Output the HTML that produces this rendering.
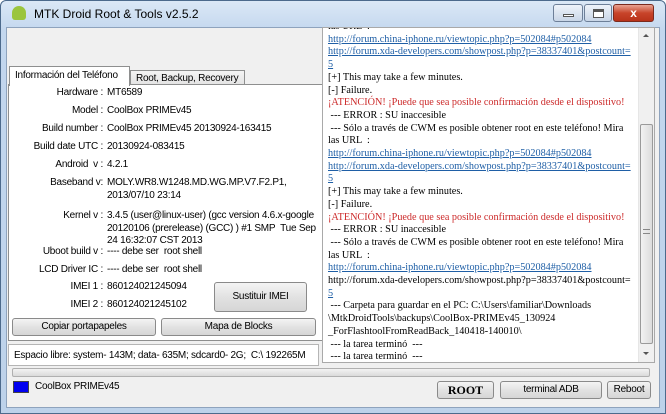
<!DOCTYPE html>
<html><head><meta charset="utf-8"><style>
*{margin:0;padding:0;box-sizing:border-box}
body{width:666px;height:414px;overflow:hidden;background:#fff;font-family:"Liberation Sans",sans-serif;font-size:10px;letter-spacing:-0.25px;color:#000;position:relative}
.abs{position:absolute;white-space:nowrap}
#win{left:0;top:0;width:666px;height:414px;background:linear-gradient(#dbe8f6,#c3d7ee 30px,#bdd2ea);border:1px solid #4c6a8c;border-radius:6px 6px 0 0}
#client{left:6px;top:27px;width:654px;height:381px;background:#f0f0f0;border:1px solid #8ea3bd}
.title{left:34px;top:7px;font-size:12px;letter-spacing:0;color:#000}
.cb{top:4px;height:18px;border:1px solid #6d7f98;border-radius:3px;background:linear-gradient(#eef3fa,#c9d6e7)}
.lbl{position:absolute;right:563px;text-align:right;white-space:nowrap}
.val{position:absolute;left:107px;white-space:nowrap}
.btn{position:absolute;border:1px solid #8a8a8a;border-radius:3px;background:linear-gradient(#f4f4f4,#e2e2e2 50%,#d6d6d6);text-align:center;font-size:10px;white-space:nowrap}
#log{left:322px;top:27px;width:333px;height:336px;background:#fff;border:1px solid #a9a9a9;overflow:hidden}
#txt{position:absolute;left:5px;top:-7px;width:312px;font-family:"Liberation Serif",serif;font-size:10.2px;letter-spacing:0;line-height:12.7px;white-space:nowrap}
#txt a{color:#1f5fa6;text-decoration:underline}
.r{color:#cc2a2a}
</style></head><body>
<div id="win" class="abs"></div>
<div class="abs" style="left:12px;top:6px;width:14px;height:14px;border-radius:7px 7px 3px 3px;background:#9bc53d"></div>
<div class="abs title">MTK Droid Root &amp; Tools v2.5.2</div>
<div class="abs cb" style="left:553px;width:30px"><div class="abs" style="left:9px;top:9px;width:11px;height:3px;background:#fff;border:1px solid #555"></div></div>
<div class="abs cb" style="left:584px;width:28px"><div class="abs" style="left:8px;top:4px;width:11px;height:9px;border:1px solid #555;border-top-width:3px;background:#fff"></div></div>
<div class="abs cb" style="left:613px;width:41px;background:linear-gradient(#e9a393,#c8442a 50%,#b8321a);border-color:#7a2a1e;color:#fff;text-align:center;font-weight:bold;font-size:12px;line-height:16px">x</div>
<div id="client" class="abs"></div>

<div class="abs" style="left:130px;top:70px;width:115px;height:16px;border:1px solid #8e8f8f;background:linear-gradient(#f4f4f4,#e3e3e3);padding:2px 0 0 5px">Root, Backup, Recovery</div>
<div class="abs" style="left:8px;top:84px;width:315px;height:257px;border:1px solid #8e8f8f;background:#fff"></div>
<div class="abs" style="left:9px;top:66px;width:121px;height:20px;border:1px solid #8e8f8f;border-bottom:none;background:#fff;padding:3px 0 0 5px">Información del Teléfono</div>

<div class="lbl" style="top:87px">Hardware :</div><div class="val" style="top:87px">MT6589</div>
<div class="lbl" style="top:105px">Model :</div><div class="val" style="top:105px">CoolBox PRIMEv45</div>
<div class="lbl" style="top:123px">Build number :</div><div class="val" style="top:123px">CoolBox PRIMEv45 20130924-163415</div>
<div class="lbl" style="top:141px">Build date UTC :</div><div class="val" style="top:141px">20130924-083415</div>
<div class="lbl" style="top:159px">Android &nbsp;v :</div><div class="val" style="top:159px">4.2.1</div>
<div class="lbl" style="top:177px">Baseband v:</div><div class="val" style="top:177px;line-height:12.5px">MOLY.WR8.W1248.MD.WG.MP.V7.F2.P1,<br>2013/07/10 23:14</div>
<div class="lbl" style="top:210px">Kernel v :</div><div class="val" style="top:210px;line-height:12.5px">3.4.5 (user@linux-user) (gcc version 4.6.x-google<br>20120106 (prerelease) (GCC) ) #1 SMP &nbsp;Tue Sep<br>24 16:32:07 CST 2013</div>
<div class="lbl" style="top:246px">Uboot build v :</div><div class="val" style="top:246px">---- debe ser &nbsp;root shell</div>
<div class="lbl" style="top:264px">LCD Driver IC :</div><div class="val" style="top:264px">---- debe ser &nbsp;root shell</div>
<div class="lbl" style="top:281px">IMEI 1 :</div><div class="val" style="top:281px">860124021245094</div>
<div class="lbl" style="top:299px">IMEI 2 :</div><div class="val" style="top:299px">860124021245102</div>
<div class="btn" style="left:214px;top:282px;width:93px;height:30px;line-height:28px">Sustituir IMEI</div>
<div class="btn" style="left:12px;top:318px;width:144px;height:18px;line-height:16px">Copiar portapapeles</div>
<div class="btn" style="left:161px;top:318px;width:155px;height:18px;line-height:16px">Mapa de Blocks</div>

<div class="abs" style="left:8px;top:344px;width:311px;height:22px;border:1px solid #b5b5b5;background:#fff;padding:5px 0 0 5px">Espacio libre: system- 143M; data- 635M; sdcard0- 2G; &nbsp;C:\ 192265M</div>

<div id="log" class="abs"><div id="txt">
las URL &nbsp;:<br>
<a>http://forum.china-iphone.ru/viewtopic.php?p=502084#p502084</a><br>
<a>http://forum.xda-developers.com/showpost.php?p=38337401&amp;postcount=</a><br>
<a>5</a><br>
[+] This may take a few minutes.<br>
[-] Failure.<br>
<span class="r">¡ATENCIÓN! ¡Puede que sea posible confirmación desde el dispositivo!</span><br>
&nbsp;--- ERROR : SU inaccesible<br>
&nbsp;--- Sólo a través de CWM es posible obtener root en este teléfono! Mira<br>
las URL &nbsp;:<br>
<a>http://forum.china-iphone.ru/viewtopic.php?p=502084#p502084</a><br>
<a>http://forum.xda-developers.com/showpost.php?p=38337401&amp;postcount=</a><br>
<a>5</a><br>
[+] This may take a few minutes.<br>
[-] Failure.<br>
<span class="r">¡ATENCIÓN! ¡Puede que sea posible confirmación desde el dispositivo!</span><br>
&nbsp;--- ERROR : SU inaccesible<br>
&nbsp;--- Sólo a través de CWM es posible obtener root en este teléfono! Mira<br>
las URL &nbsp;:<br>
<a>http://forum.china-iphone.ru/viewtopic.php?p=502084#p502084</a><br>
http://forum.xda-developers.com/showpost.php?p=38337401&amp;postcount=<br>
<a>5</a><br>
&nbsp;--- Carpeta para guardar en el PC: C:\Users\familiar\Downloads<br>
\MtkDroidTools\backups\CoolBox-PRIMEv45_130924<br>
_ForFlashtoolFromReadBack_140418-140010\<br>
&nbsp;--- la tarea terminó &nbsp;---<br>
&nbsp;--- la tarea terminó &nbsp;---
</div>
<div class="abs" style="left:315px;top:0;width:17px;height:334px;background:#f0f0f0;border-left:1px solid #e6e6e6"></div>
<div class="abs" style="left:320px;top:6px;width:0;height:0;border:3px solid transparent;border-bottom:3px solid #555;border-top:none"></div>
<div class="abs" style="left:317px;top:96px;width:13px;height:220px;border:1px solid #9a9a9a;border-radius:2px;background:linear-gradient(90deg,#f2f2f2,#dcdcdc)"></div>
<div class="abs" style="left:320px;top:201px;width:7px;height:5px;border-top:1px solid #888;border-bottom:1px solid #888"></div>
<div class="abs" style="left:320px;top:324px;width:0;height:0;border:3px solid transparent;border-top:3px solid #555;border-bottom:none"></div>
</div>

<div class="abs" style="left:12px;top:368px;width:638px;height:9px;border:1px solid #b0b0b0;border-radius:2px;background:linear-gradient(#f3f3f3,#dadada)"></div>
<div class="abs" style="left:13px;top:381px;width:16px;height:12px;background:#0000f0;border:1px solid #444"></div>
<div class="abs" style="left:35px;top:381px">CoolBox PRIMEv45</div>
<div class="btn" style="left:437px;top:381px;width:57px;height:18px;line-height:16px;font-family:'Liberation Serif',serif;font-weight:bold;font-size:12px;letter-spacing:0">ROOT</div>
<div class="btn" style="left:500px;top:381px;width:102px;height:18px;line-height:16px">terminal ADB</div>
<div class="btn" style="left:607px;top:381px;width:44px;height:18px;line-height:16px">Reboot</div>
</body></html>
